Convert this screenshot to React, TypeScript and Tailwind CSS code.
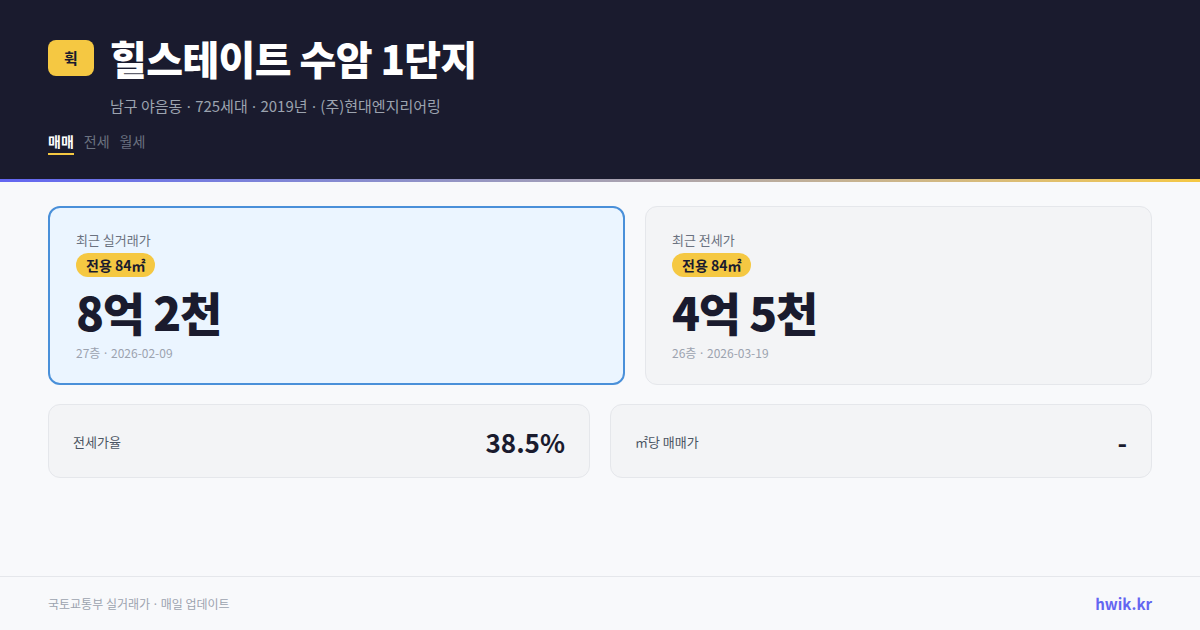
import React from "react";

const font = { fontFamily: '"Noto Sans CJK KR", "Noto Sans", sans-serif' };

function Dot() {
  return <span className="font-['Noto_Sans',sans-serif] mx-[1px]">·</span>;
}

export default function App() {
  return (
    <div className="w-[1200px] h-[630px] flex flex-col bg-[#f8f9fb] overflow-hidden" style={font}>
      <div className="h-[179px] bg-[#1a1b2e] px-12 pt-[37px] flex flex-col shrink-0">
        <div className="flex items-center gap-4">
          <div className="w-[46px] h-[36px] rounded-lg bg-[#f5c842] flex items-center justify-center text-[15px] font-bold text-[#1a1b2e]">휙</div>
          <div className="text-[40px] leading-[42px] font-extrabold text-white tracking-[-0.6px]">힐스테이트 수암 1단지</div>
        </div>
        <div className="pl-[62px] mt-[16px] text-[15px] leading-[22px] text-[#9ca3af]">
          남구 야음동 <Dot /> 725세대 <Dot /> 2019년 <Dot /> (주)현대엔지리어링
        </div>
        <div className="flex gap-[10px] mt-[14px] text-[14px] leading-[20px]">
          <div className="flex flex-col">
            <span className="font-bold text-white">매매</span>
            <span className="h-[2px] bg-[#f5c842] mt-[2px]"></span>
          </div>
          <span className="text-[#6b7280]">전세</span>
          <span className="text-[#6b7280]">월세</span>
        </div>
      </div>
      <div className="h-[3px] bg-gradient-to-r from-[#6366f1] to-[#f5c842] shrink-0"></div>
      <div className="flex-1 px-12 pt-6">
        <div className="flex gap-5">
          <div className="w-[577px] h-[179px] rounded-xl border-2 border-[#4a90d9] bg-[#ebf5ff] px-[26px] pt-[22px]">
            <Card label="최근 실거래가" price="8억 2천" floor="27층" date="2026-02-09" />
          </div>
          <div className="flex-1 h-[179px] rounded-xl border border-[#e5e7eb] bg-[#f3f4f6] px-[26px] pt-[23px]">
            <Card label="최근 전세가" price="4억 5천" floor="26층" date="2026-03-19" />
          </div>
        </div>
        <div className="flex gap-5 mt-[19px]">
          <div className="flex-1 h-[74px] rounded-xl border border-[#e5e7eb] bg-[#f3f4f6] px-6 flex items-center justify-between">
            <span className="text-[13px] text-[#4b5563] pt-[1px]">전세가율</span>
            <span className="text-[26px] font-bold text-[#1a1b2e]">38.5%</span>
          </div>
          <div className="flex-1 h-[74px] rounded-xl border border-[#e5e7eb] bg-[#f3f4f6] px-6 flex items-center justify-between">
            <span className="text-[13px] text-[#4b5563] pt-[1px]">㎡당 매매가</span>
            <span className="text-[26px] font-bold text-[#1a1b2e]">-</span>
          </div>
        </div>
      </div>
      <div className="h-[54px] border-t border-[#e5e7eb] px-12 pt-[2px] flex items-center justify-between shrink-0">
        <span className="text-[12px] text-[#9ca3af]">국토교통부 실거래가 <Dot /> 매일 업데이트</span>
        <span className="text-[15px] font-bold text-[#6366f1]">hwik.kr</span>
      </div>
    </div>
  );
}

function Card({ label, price, floor, date }: { label: string; price: string; floor: string; date: string }) {
  return (
    <div className="flex flex-col items-start">
      <span className="text-[13px] leading-[20px] text-[#6b7280]">{label}</span>
      <span className="mt-[3px] h-[24px] px-[10px] rounded-full bg-[#f5c842] text-[14px] font-bold text-[#1a1b2e] flex items-center">전용 84㎡</span>
      <span className="mt-[4px] text-[46px] leading-[60px] font-black tracking-[-1.2px] text-[#1a1b2e]">{price}</span>
      <span className="mt-[3px] text-[12px] leading-[18px] text-[#9ca3af]">
        {floor} <Dot /> {date}
      </span>
    </div>
  );
}
